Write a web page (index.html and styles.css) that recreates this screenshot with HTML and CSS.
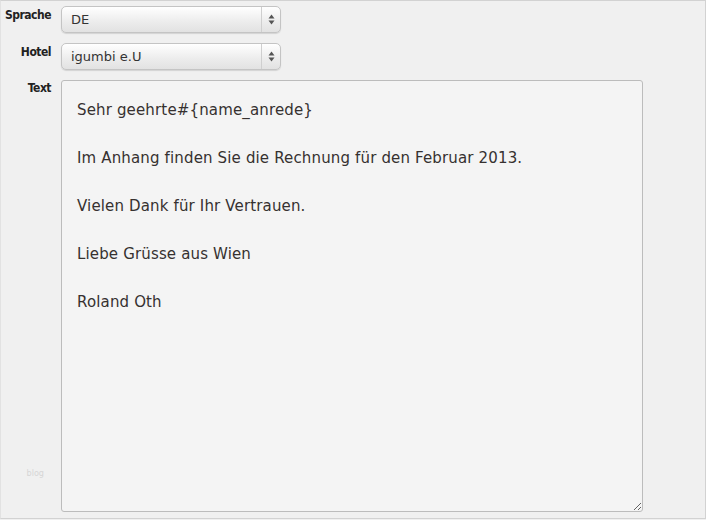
FILE: index.html
```html
<!DOCTYPE html>
<html lang="de">
<head>
<meta charset="utf-8">
<title>Rechnung</title>
<link rel="stylesheet" href="styles.css">
</head>
<body>
<div class="frame">
  <form class="form">
    <label class="label" for="sprache">Sprache</label>
    <div class="select">
      <span class="select-value">DE</span>
      <span class="select-arrows">
        <svg width="7" height="11" viewBox="0 0 7 11"><path d="M3.5 0.5 L6.5 4.5 L0.5 4.5 Z M3.5 10.5 L6.5 6.5 L0.5 6.5 Z" fill="#555"/></svg>
      </span>
    </div>

    <label class="label" for="hotel">Hotel</label>
    <div class="select">
      <span class="select-value">igumbi e.U</span>
      <span class="select-arrows">
        <svg width="7" height="11" viewBox="0 0 7 11"><path d="M3.5 0.5 L6.5 4.5 L0.5 4.5 Z M3.5 10.5 L6.5 6.5 L0.5 6.5 Z" fill="#555"/></svg>
      </span>
    </div>

    <div class="label label-text">
      <label for="text">Text</label>
      <span class="blog">blog</span>
    </div>
    <textarea id="text" class="textarea">Sehr geehrte#{name_anrede}

Im Anhang finden Sie die Rechnung für den Februar 2013.

Vielen Dank für Ihr Vertrauen.

Liebe Grüsse aus Wien

Roland Oth</textarea>
  </form>
</div>
</body>
</html>
```

FILE: styles.css
```css
html, body {
  margin: 0;
  padding: 0;
  background: #f0f0f0;
}

.frame {
  box-sizing: border-box;
  width: 706px;
  height: 519px;
  border: 1px solid #d2d2d2;
  border-left-color: #e2e2e2;
  background: #f0f0f0;
  padding-top: 5px;
}

.form {
  display: grid;
  grid-template-columns: 50px 582px;
  column-gap: 10px;
  row-gap: 10px;
  align-items: start;
}

.label {
  font-family: "DejaVu Sans Condensed", "DejaVu Sans", sans-serif;
  font-weight: bold;
  font-size: 12px;
  color: #222;
  text-align: right;
  padding-top: 2px;
  letter-spacing: -0.5px;
}

.label-text {
  display: flex;
  flex-direction: column;
  align-items: flex-end;
  justify-content: space-between;
  height: 432px;
  box-sizing: border-box;
  padding-top: 1px;
  padding-bottom: 34px;
}

.blog {
  font-family: "DejaVu Sans Condensed", "DejaVu Sans", sans-serif;
  font-weight: normal;
  font-size: 9px;
  letter-spacing: 0;
  color: #d6d6d6;
  margin-right: 7px;
}

.select {
  box-sizing: border-box;
  width: 220px;
  height: 27px;
  display: flex;
  align-items: stretch;
  border: 1px solid #c4c4c4;
  border-radius: 5px;
  background: linear-gradient(#ffffff, #ececec 60%, #e2e2e2);
  box-shadow: 0 1px 1px rgba(0, 0, 0, 0.12);
}

.select-value {
  flex: 1;
  display: flex;
  align-items: center;
  padding-left: 9px;
  font-family: "DejaVu Sans", sans-serif;
  font-size: 13px;
  color: #333;
}

.select-arrows {
  width: 18px;
  display: flex;
  align-items: center;
  justify-content: center;
  border-left: 1px solid #cfcfcf;
}

.textarea {
  box-sizing: border-box;
  width: 582px;
  height: 432px;
  margin: 0;
  border: 1px solid #bcbcbc;
  border-radius: 3px;
  background: #f4f4f4;
  padding: 17px 15px 15px;
  font-family: "DejaVu Sans", sans-serif;
  font-size: 15px;
  line-height: 24px;
  letter-spacing: 0.15px;
  color: #363130;
  resize: both;
  outline: none;
}
```
